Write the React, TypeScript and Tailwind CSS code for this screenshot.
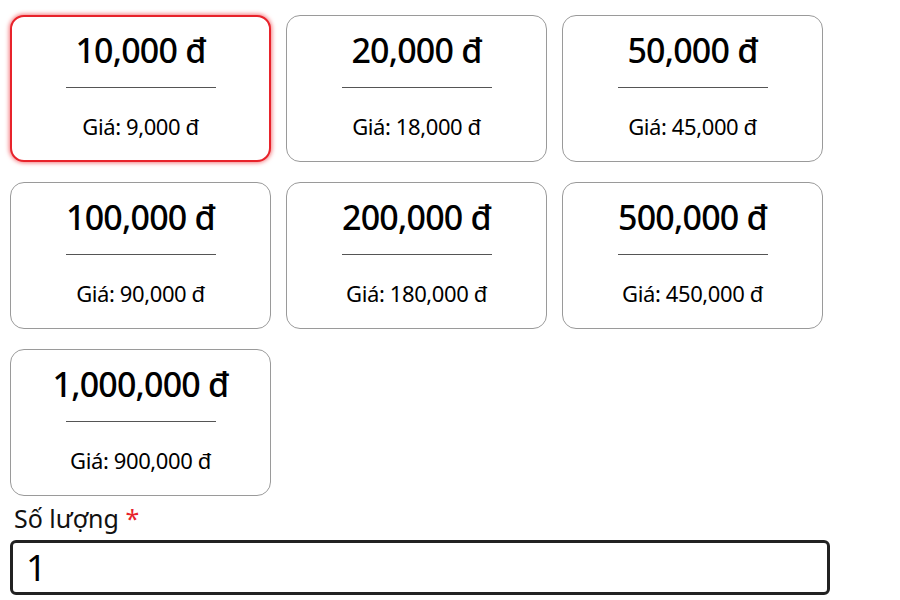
import React from "react";

const options = [
  { value: "10,000 đ", price: "9,000 đ" },
  { value: "20,000 đ", price: "18,000 đ" },
  { value: "50,000 đ", price: "45,000 đ" },
  { value: "100,000 đ", price: "90,000 đ" },
  { value: "200,000 đ", price: "180,000 đ" },
  { value: "500,000 đ", price: "450,000 đ" },
  { value: "1,000,000 đ", price: "900,000 đ" },
];

const CardOption: React.FC<{ value: string; price: string; selected?: boolean }> = ({
  value,
  price,
  selected,
}) => (
  <div
    className={
      selected
        ? "h-[147px] rounded-[14px] border-2 border-[#e8232b] shadow-[0_0_4px_1px_#f47a7e] bg-white flex flex-col items-center"
        : "h-[147px] rounded-[14px] border border-[#9a9a9a] bg-white flex flex-col items-center"
    }
  >
    <p
      className={
        selected
          ? "text-[34px] font-[480] tracking-[-0.8px] leading-none text-black pt-[16px]"
          : "text-[34px] font-[480] tracking-[-0.8px] leading-none text-black pt-[17px]"
      }
    >
      {value}
    </p>
    <div className="w-[150px] h-px bg-[#555] mt-[20px]" />
    <p className="text-[22px] font-[430] tracking-[-0.4px] leading-none text-black mt-[27px]">Giá: {price}</p>
  </div>
);

export default function App() {
  return (
    <div className="w-[900px] h-[600px] bg-white overflow-hidden font-['Noto_Sans',sans-serif]">
      <div className="grid grid-cols-[261px_261px_261px] gap-x-[15px] gap-y-[20px] pl-[10px] pt-[15px]">
        {options.map((o, i) => (
          <CardOption key={o.value} value={o.value} price={o.price} selected={i === 0} />
        ))}
      </div>
      <div className="pl-[14px] pt-[6px]">
        <label className="text-[25px] font-[430] leading-[32px] text-[#111]">
          Số lượng <span className="text-[#e8232b]">*</span>
        </label>
      </div>
      <div className="pl-[10px] pt-[6px]">
        <div className="w-[820px] h-[55px] border-[3px] border-[#222] rounded-[6px] flex items-center pl-[13px]">
          <span className="text-[36px] font-[430] text-black leading-none">1</span>
        </div>
      </div>
    </div>
  );
}
